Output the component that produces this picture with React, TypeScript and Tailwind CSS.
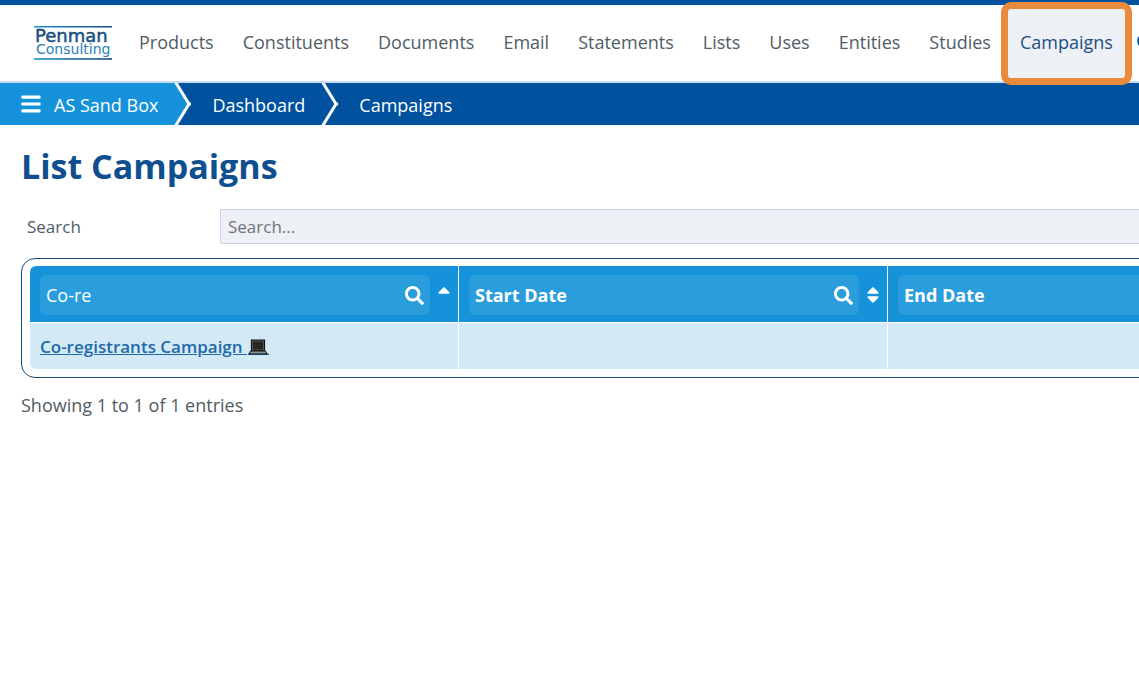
import React, { useState } from 'react';
import { FaBars, FaSearch, FaSort, FaSortUp, FaQuestionCircle } from 'react-icons/fa';

const navItems = [
  'Products',
  'Constituents',
  'Documents',
  'Email',
  'Statements',
  'Lists',
  'Uses',
  'Entities',
  'Studies',
  'Campaigns',
];

const Logo: React.FC = () => (
  <svg width="78" height="34" viewBox="0 0 78 34" role="img" aria-label="Penman Consulting">
    <defs>
      <linearGradient id="logoLine" x1="0" x2="1" y1="0" y2="0">
        <stop offset="0" stopColor="#1f8fcf" />
        <stop offset="1" stopColor="#174a80" />
      </linearGradient>
      <linearGradient id="logoName" x1="0" x2="0" y1="0" y2="1">
        <stop offset="0" stopColor="#153f6b" />
        <stop offset="1" stopColor="#1d6aa3" />
      </linearGradient>
    </defs>
    <rect x="0" y="0" width="78" height="1.5" fill="url(#logoLine)" />
    <rect x="0" y="32.2" width="78" height="1.6" fill="url(#logoLine)" />
    <text x="1" y="16" fontFamily="DejaVu Sans, sans-serif" fontSize="18" fill="url(#logoName)" stroke="#17497a" strokeWidth="0.5">
      Penman
    </text>
    <text x="2" y="28" fontFamily="DejaVu Sans, sans-serif" fontSize="14" fill="#2a7fb8">
      Consulting
    </text>
  </svg>
);

const Chevron: React.FC<{ fill?: string }> = ({ fill = 'none' }) => (
  <svg width="18" height="42" viewBox="0 0 18 42" aria-hidden="true" className="shrink-0">
    <path d="M0 0H2L15 21L2 42H0z" fill={fill} />
    <path d="M1.500 -1L15 21L1.500 43M14 21h3" fill="none" stroke="#fff" strokeWidth="3" />
  </svg>
);

const Laptop: React.FC = () => (
  <svg width="21" height="17" viewBox="0 0 21 17" aria-hidden="true" className="ml-px inline-block align-[-3px]">
    <path d="M0 14.500h21v1.500H0z" fill="#2169a8" />
    <path d="M3.500 1h13v11h-13z" fill="#2b2523" stroke="#111" strokeWidth="1.200" />
    <path d="M4.500 2h11v9h-11z" fill="none" stroke="#8a8a8a" strokeWidth="0.500" />
    <path d="M2.500 12h15l1.500 3H1z" fill="#8d9196" stroke="#111" strokeWidth="1" />
  </svg>
);

type ColumnFilterProps = {
  label: string;
  value: string;
  sorted?: boolean;
  onChange: (value: string) => void;
};

const ColumnFilter: React.FC<ColumnFilterProps> = ({ label, value, sorted, onChange }) => (
  <div className="flex items-center gap-2">
    <div className="flex h-10 min-w-0 flex-1 items-center rounded-md bg-[#2a9ddd] px-[6px]">
      <input
        type="text"
        aria-label={label}
        placeholder={label}
        value={value}
        onChange={(e) => onChange(e.target.value)}
        className="min-w-0 flex-1 bg-transparent text-lg font-normal text-white outline-none placeholder:font-bold placeholder:text-white placeholder:opacity-100"
      />
      <button type="button" aria-label={`Filter ${label}`} className="text-white">
        <FaSearch size={19} />
      </button>
    </div>
    <button type="button" aria-label={`Sort by ${label}`} className="flex w-3 justify-center text-white">
      {sorted ? <FaSortUp size={20} className="shrink-0" /> : <FaSort size={20} className="shrink-0" />}
    </button>
  </div>
);

const App: React.FC = () => {
  const [search, setSearch] = useState('');
  const [filters, setFilters] = useState<Record<string, string>>({ Name: 'Co-re' });

  const columns = ['Name', 'Start Date', 'End Date'];

  return (
    <div className="min-h-screen overflow-hidden bg-white font-['Open_Sans',sans-serif] text-[#4f5c66]">
      <header className="border-t-[5px] border-b-2 border-t-[#00529f] border-b-[#c5dcf0]">
        <div className="flex h-[76px] items-center">
          <a href="#home" className="ml-[34px] mr-[13px] shrink-0">
            <Logo />
          </a>
          <nav className="flex h-full shrink-0 gap-px text-lg">
            {navItems.map((item) =>
              item === 'Campaigns' ? (
                <a
                  key={item}
                  href="#campaigns"
                  aria-current="page"
                  className="relative flex items-center bg-[#edf1f6] px-[14px] pb-0.5 text-[#1d4f85]"
                >
                  {item}
                  <span className="absolute -inset-x-[5px] -top-[3px] -bottom-1 rounded-[10px] border-[7px] border-[#e88b3c]" />
                </a>
              ) : (
                <a key={item} href="#" className="flex items-center px-[14px] pb-0.5">
                  {item}
                </a>
              ),
            )}
          </nav>
          <button type="button" aria-label="Help" className="ml-[10px] shrink-0 pb-1 text-[#00529f]">
            <FaQuestionCircle size={16} />
          </button>
        </div>
      </header>

      <nav aria-label="Breadcrumb" className="flex h-[42px] items-center bg-[#00529f] text-lg text-white">
        <div className="flex h-full items-center bg-[#1592d9] pl-5 pr-4">
          <button type="button" aria-label="Menu" className="mr-3">
            <FaBars size={22} />
          </button>
          <a href="#sandbox" className="pt-0.5">AS Sand Box</a>
        </div>
        <Chevron fill="#1592d9" />
        <a href="#dashboard" className="pt-0.5 pl-5 pr-4">Dashboard</a>
        <Chevron />
        <a href="#campaigns" className="pt-0.5 pl-5">Campaigns</a>
      </nav>

      <main className="pl-[21px] pt-4">
        <h1 className="text-[34px] font-bold leading-[50px] text-[#0f4f8f]">List Campaigns</h1>

        <div className="mt-[18px] flex items-center">
          <label htmlFor="search" className="w-[199px] shrink-0 pl-[6px] text-[17px]">
            Search
          </label>
          <input
            id="search"
            type="text"
            placeholder="Search..."
            value={search}
            onChange={(e) => setSearch(e.target.value)}
            className="-mr-2 h-[35px] min-w-0 flex-1 rounded-xs border border-[#c5d3e6] bg-[#edf0f5] px-[7px] text-[17px] outline-none placeholder:text-[#70757c]"
          />
        </div>

        <div className="mt-[14px] w-max rounded-[14px] border border-[#174a74] px-2 pt-[7px] pb-2">
          <div className="overflow-hidden rounded-md">
            <table className="border-separate border-spacing-0">
              <thead>
                <tr className="h-[57px] bg-[#1592d9]">
                  {columns.map((column) => (
                    <th
                      key={column}
                      scope="col"
                      className="w-[429px] min-w-[429px] border-r border-b border-white pt-0.5 pr-2 pl-[10px] align-middle"
                    >
                      <ColumnFilter
                        label={column}
                        value={filters[column] ?? ''}
                        sorted={column === 'Name'}
                        onChange={(value) => setFilters({ ...filters, [column]: value })}
                      />
                    </th>
                  ))}
                </tr>
              </thead>
              <tbody>
                <tr className="h-[46px] bg-[#d4e9f6]">
                  <td className="border-r border-white px-[10px] pt-0.5 text-[17px] font-semibold text-[#2169a8]">
                    <a href="#co-registrants" className="underline">
                      Co-registrants Campaign <Laptop />
                    </a>
                  </td>
                  <td className="border-r border-white" />
                  <td />
                </tr>
              </tbody>
            </table>
          </div>
        </div>

        <p className="mt-[13px] text-lg">Showing 1 to 1 of 1 entries</p>
      </main>
    </div>
  );
};

export default App;
